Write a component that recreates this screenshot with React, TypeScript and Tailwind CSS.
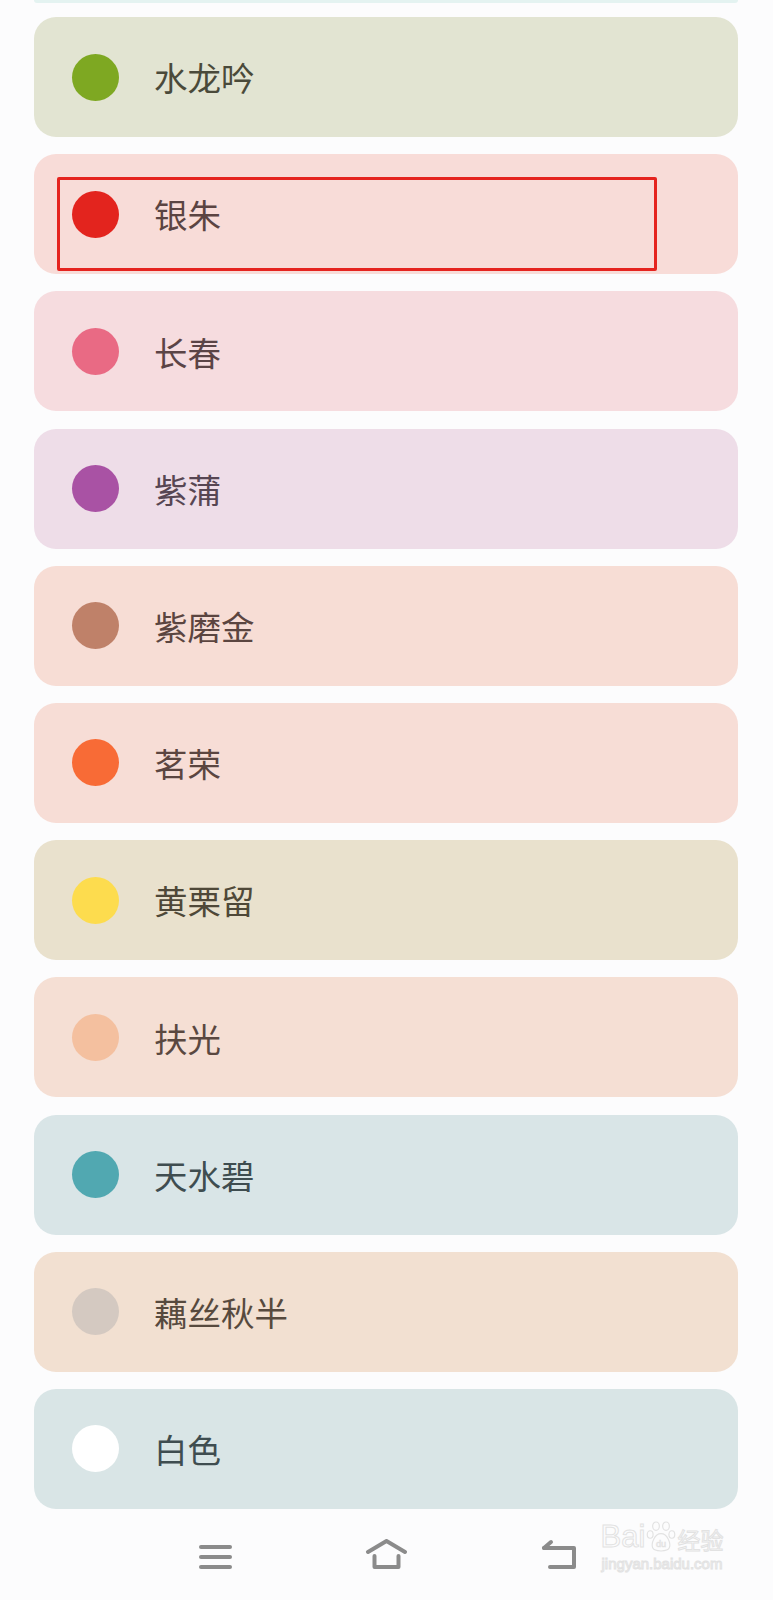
const colors = [
  { name: "水龙吟", bg: "bg-[#e2e4d2]", dot: "bg-[#7ea822]", text: "text-[#4a4a3a]" },
  { name: "银朱", bg: "bg-[#f8dcd8]", dot: "bg-[#e3241e]", text: "text-[#5b4442]" },
  { name: "长春", bg: "bg-[#f6dcdf]", dot: "bg-[#e96a84]", text: "text-[#5b4446]" },
  { name: "紫蒲", bg: "bg-[#eedde8]", dot: "bg-[#a952a4]", text: "text-[#574653]" },
  { name: "紫磨金", bg: "bg-[#f7ddd5]", dot: "bg-[#bf8169]", text: "text-[#5b4540]" },
  { name: "茗荣", bg: "bg-[#f7ddd6]", dot: "bg-[#f86b36]", text: "text-[#5b4540]" },
  { name: "黄栗留", bg: "bg-[#e9e1cd]", dot: "bg-[#fddc4e]", text: "text-[#4f4838]" },
  { name: "扶光", bg: "bg-[#f5dfd4]", dot: "bg-[#f4c09f]", text: "text-[#5a4840]" },
  { name: "天水碧", bg: "bg-[#d9e5e7]", dot: "bg-[#51a8b1]", text: "text-[#3f4d50]" },
  { name: "藕丝秋半", bg: "bg-[#f2e0d1]", dot: "bg-[#d4c9c1]", text: "text-[#574a3e]" },
  { name: "白色", bg: "bg-[#d9e5e6]", dot: "bg-[#ffffff]", text: "text-[#3f4d50]" },
];

function Paw() {
  return (
    <svg width="30" height="36" viewBox="0 0 36 40" fill="none" stroke="#e2e2e2" strokeWidth="1.4" className="shrink-0">
      <ellipse cx="12" cy="7" rx="4" ry="5" />
      <ellipse cx="24" cy="7" rx="4" ry="5" />
      <ellipse cx="5" cy="17" rx="3.5" ry="4.5" />
      <ellipse cx="31" cy="17" rx="3.5" ry="4.5" />
      <path d="M18 16 C10 16 6 28 8 33 C10 38 26 38 28 33 C30 28 26 16 18 16 Z" />
      <text x="18" y="32" textAnchor="middle" fontSize="11" fontFamily="Liberation Sans, sans-serif" fill="none" stroke="#e2e2e2" strokeWidth="0.8">du</text>
    </svg>
  );
}

function NavIcons() {
  return (
    <div className="relative h-[91px]">
      <div className="flex items-end pl-[198px] pt-[30px]">
        <svg width="34" height="30" viewBox="0 0 34 30">
          <g stroke="#8b8b8b" strokeWidth="4" strokeLinecap="round">
            <line x1="3" y1="7" x2="32" y2="7" />
            <line x1="3" y1="17" x2="32" y2="17" />
            <line x1="3" y1="27" x2="32" y2="27" />
          </g>
        </svg>
        <svg width="43" height="31" viewBox="0 0 43 31" className="ml-[133px]">
          <g stroke="#8b8b8b" strokeWidth="4" strokeLinecap="round" strokeLinejoin="round" fill="none">
            <polyline points="3,13 21.5,2 40,13" />
            <path d="M9.5 17 V28 H33.5 V17" />
          </g>
        </svg>
        <svg width="37" height="31" viewBox="0 0 37 31" className="ml-[133px]">
          <g stroke="#8b8b8b" strokeWidth="4" strokeLinecap="round" strokeLinejoin="round" fill="none">
            <path d="M3 9 L10 3" />
            <path d="M3 9 H33 V28 H9" />
          </g>
        </svg>
      </div>
      <div className="absolute left-[592px] top-[10px] flex w-[140px] flex-col items-center whitespace-nowrap font-['Liberation_Sans',sans-serif] text-transparent [-webkit-text-stroke:1px_#e2e2e2]">
        <div className="flex items-end gap-[1px] text-[31px] leading-[36px]">
          <span>Bai</span>
          <Paw />
          <span className="font-['Noto_Sans_CJK_SC',sans-serif] text-[23px] leading-[32px]">经验</span>
        </div>
        <div className="text-[15px] leading-[18px]">jingyan.baidu.com</div>
      </div>
    </div>
  );
}

export default function App() {
  return (
    <div className="min-h-screen w-[773px] bg-[#fcfcfd] font-['Noto_Sans_CJK_SC',sans-serif]">
      <div className="mx-[34px] h-[3px] w-[704px] rounded-b-[6px] bg-[#e4f3f1]" />
      <div className="flex flex-col gap-[17.2px] pl-[34px] pt-[14px]">
        {colors.map((c, i) => (
          <div
            key={c.name}
            className={`relative flex h-[120px] w-[704px] items-center rounded-[22px] pl-[38px] ${c.bg}`}
          >
            <div className={`h-[47px] w-[47px] shrink-0 rounded-full ${c.dot}`} />
            <span className={`ml-[35px] text-[33.5px] leading-none ${c.text}`}>{c.name}</span>
            {i === 1 && (
              <div className="absolute left-[23px] top-[23px] h-[94px] w-[600px] rounded-[2px] border-[3px] border-[#e5241f]" />
            )}
          </div>
        ))}
      </div>
      <NavIcons />
    </div>
  );
}
